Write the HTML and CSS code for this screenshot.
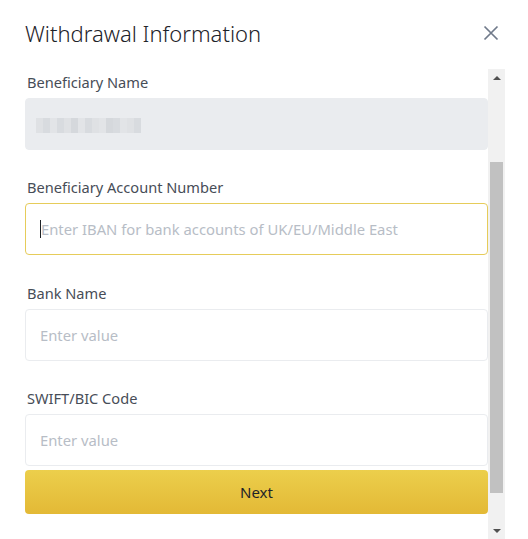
FILE: index.html
```html
<!DOCTYPE html>
<html>
<head>
<meta charset="utf-8">
<link rel="stylesheet" href="styles.css">
</head>
<body>
<div class="dialog">
  <div class="header">
    <h1 class="title">Withdrawal Information</h1>
    <svg class="close" width="16" height="16" viewBox="0 0 16 16"><path d="M1.5 1.5 L14.5 14.5 M14.5 1.5 L1.5 14.5" stroke="#707a8a" stroke-width="1.7" fill="none"/></svg>
  </div>
  <div class="body">
    <div class="content">
      <div class="field f1">
        <div class="label">Beneficiary Name</div>
        <div class="input disabled">
          <div class="pixels">
            <span class="p a"></span><span class="p b"></span><span class="p c"></span><span class="p b"></span><span class="p a"></span><span class="p d"></span><span class="p c"></span><span class="p b"></span><span class="p a"></span><span class="p c"></span><span class="p d"></span><span class="p b"></span><span class="p c"></span><span class="p a"></span><span class="p b"></span>
          </div>
        </div>
      </div>
      <div class="field f2">
        <div class="label">Beneficiary Account Number</div>
        <div class="input focused"><span class="caret"></span><span class="placeholder">Enter IBAN for bank accounts of UK/EU/Middle East</span></div>
      </div>
      <div class="field f3">
        <div class="label">Bank Name</div>
        <div class="input"><span class="placeholder">Enter value</span></div>
      </div>
      <div class="field f4">
        <div class="label">SWIFT/BIC Code</div>
        <div class="input"><span class="placeholder">Enter value</span></div>
      </div>
      <button class="next">Next</button>
    </div>
    <div class="scrollbar">
      <div class="arrow up"></div>
      <div class="track"><div class="thumb"></div></div>
      <div class="arrow down"></div>
    </div>
  </div>
</div>
</body>
</html>
```
FILE: styles.css
```css
* { box-sizing: border-box; }
html, body { margin: 0; padding: 0; background: #fff; }
body { font-family: "Noto Sans", "Open Sans", sans-serif; color: #1e2329; }
.dialog { width: 528px; height: 539px; overflow: hidden; }
.header { height: 69px; display: flex; align-items: center; justify-content: space-between; padding: 0 29px 3px 25px; }
.title { margin: 0; font-size: 22px; font-weight: 300; color: #1e2329; line-height: 30px; }
.close { display: block; }
.body { display: flex; height: 470px; }
.content { width: 463px; margin-left: 25px; padding-top: 3px; display: flex; flex-direction: column; }
.field { display: flex; flex-direction: column; }
.f1 { margin-bottom: 27px; }
.f2 { margin-bottom: 28px; }
.f3 { margin-bottom: 27px; }
.f4 { margin-bottom: 4px; }
.label { font-size: 14.6px; line-height: 20px; color: #474d57; margin-bottom: 6px; padding-left: 2px; }
.input { height: 52px; border: 1px solid #eaecef; border-radius: 4px; display: flex; align-items: center; padding: 0 14px; font-size: 14.8px; }
.input.disabled { background: #eaecef; padding-left: 10px; }
.input.focused { border-color: #e6cc5a; }
.pixels { display: flex; height: 15px; margin-top: 2px; }
.p { width: 7px; height: 100%; }
.p.a { background: #dfe1e4; }
.p.b { background: #d8dbdf; }
.p.c { background: #e2e4e7; }
.p.d { background: #d5d8dc; }
.placeholder { color: #b7bdc6; }
.caret { width: 1px; height: 18px; background: #1e2329; }
.next { height: 44px; border: none; border-radius: 4px; background: linear-gradient(180deg, #eccf4c, #e3b936); font-family: inherit; font-size: 15px; color: #1e2329; padding: 0; }
.scrollbar { width: 17px; background: #f1f1f1; display: flex; flex-direction: column; }
.arrow { height: 17px; display: flex; align-items: center; justify-content: center; }
.arrow.up::before { content: ""; border-left: 4px solid transparent; border-right: 4px solid transparent; border-bottom: 4px solid #505050; }
.arrow.down::before { content: ""; border-left: 4px solid transparent; border-right: 4px solid transparent; border-top: 4px solid #505050; }
.track { flex: 1; padding-top: 76px; padding-left: 2px; padding-right: 2px; }
.thumb { height: 331px; background: #c1c1c1; }
```
